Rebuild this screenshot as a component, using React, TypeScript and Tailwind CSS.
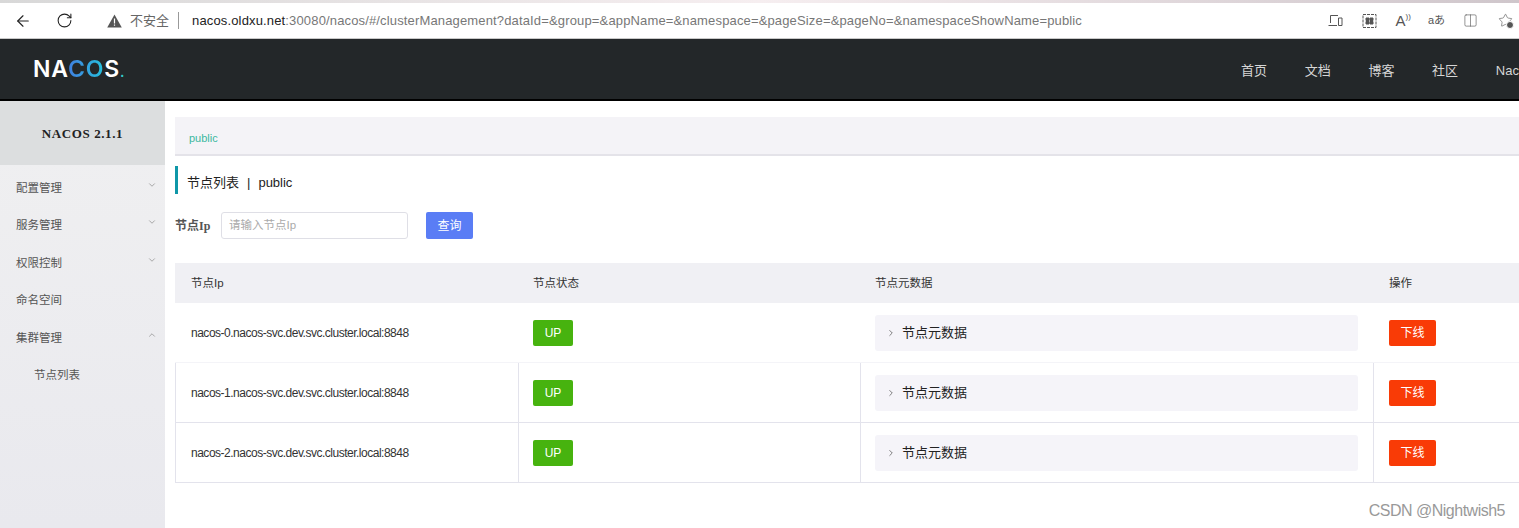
import React from 'react';
import { ArrowLeft, RotateCw, ChevronDown, ChevronUp, ChevronRight, Columns2, Star } from 'lucide-react';

const sans = "font-['Liberation_Sans','Noto_Sans_CJK_SC',sans-serif]";

const navLinks = ['首页', '文档', '博客', '社区'];
const menus = [
  { label: '配置管理', icon: 'down' },
  { label: '服务管理', icon: 'down' },
  { label: '权限控制', icon: 'down' },
  { label: '命名空间', icon: '' },
  { label: '集群管理', icon: 'up' },
];
const nodes = ['nacos-0', 'nacos-1', 'nacos-2'];

const BrowserBar = () => (
  <div className="h-[39px] bg-white border-b border-[#c9c9c9] flex flex-col">
    <div className="h-[3px] bg-gradient-to-r from-[#d8d8d8] via-[#f6eef0] to-[#cfc6cb]" />
    <div className="flex-1 flex items-center text-[#5f6368]">
      <ArrowLeft className="w-[18px] h-[18px] ml-[14px] text-[#222]" strokeWidth={1.5} />
      <RotateCw className="w-[17px] h-[17px] ml-6 text-[#222]" strokeWidth={1.5} />
      {/* warning sign */}
      <svg className="ml-[34px]" width="15" height="14" viewBox="0 0 15 14">
        <path d="M7.5 0.5L14.8 13.5H0.2z" fill="#555" />
        <path d="M6.9 4.5h1.2v5H6.9zM6.9 10.5h1.2v1.3H6.9z" fill="#fff" />
      </svg>
      <span className="ml-2 text-[13px] text-[#666]">不安全</span>
      <span className="ml-[9px] w-px h-[17px] bg-[#999]" />
      <span className="ml-[13px] text-[13px] tracking-[0.15px] whitespace-nowrap text-[#777]">
        <span className="text-[#222]">nacos.oldxu.net</span>:30080/nacos/#/clusterManagement?dataId=&amp;group=&amp;appName=&amp;namespace=&amp;pageSize=&amp;pageNo=&amp;namespaceShowName=public
      </span>
      <div className="ml-auto flex items-center text-[#555]">
        <svg width="15" height="13" viewBox="0 0 15 13" fill="none" stroke="currentColor" strokeWidth="1">
          <path d="M2.5 9V1.5H10M0.5 11.5H9M10.5 4h3.5v7.5h-3.5z" />
        </svg>
        <svg className="ml-[19px]" width="15" height="14" viewBox="0 0 14 14" fill="none" stroke="currentColor" strokeWidth="1">
          <rect x="0.5" y="0.5" width="13" height="13" strokeDasharray="3 1" />
          <path d="M3.5 4h3v2.5h-3zM7.5 4h3v2.5h-3zM3.5 7.5h3V10h-3zM7.5 7.5h3V10h-3z" fill="currentColor" />
        </svg>
        <span className="ml-[19px] text-[15px] leading-none">A</span>
        <span className="text-[8px] leading-none -mt-2">))</span>
        <span className="ml-[17px] text-[11px] leading-none">aあ</span>
        <Columns2 className="w-[15px] h-[15px] ml-[18px]" strokeWidth={1} />
        <div className="relative ml-[20px] mr-[6px]">
          <Star className="w-[15px] h-[15px]" strokeWidth={1} />
          <span className="absolute -right-[1px] -bottom-[1px] w-[8px] h-[8px] rounded-full bg-[#555] border border-white" />
        </div>
      </div>
    </div>
  </div>
);

const Header = () => (
  <div className="h-[62px] bg-[#232729] border-b-2 border-black flex items-center overflow-hidden">
    <span className="ml-[33px] text-[23px] leading-none font-semibold tracking-[0.8px] text-white font-['Inter',sans-serif]">
      NA<span className="bg-gradient-to-r from-[#3f7fe0] to-[#22c0dc] bg-clip-text text-transparent">CO</span>S<span className="text-[#3cc] text-[14px]">.</span>
    </span>
    <div className="ml-auto pt-[3px] flex items-center gap-[37.7px] text-[13px] text-[#d6d6d6] w-[278px] whitespace-nowrap">
      {navLinks.map((l) => (
        <span key={l}>{l}</span>
      ))}
      <span>Nacos</span>
    </div>
  </div>
);

const Sidebar = () => (
  <aside className="w-[165px] shrink-0 bg-gradient-to-b from-[#f0f0f1] to-[#e9e9ee]">
    <div className="h-[64px] pt-[1px] bg-[#dcdedf] flex items-center justify-center text-[13px] font-bold text-[#222] font-['Liberation_Serif','Noto_Sans_CJK_SC',serif] tracking-[0.6px]">
      NACOS 2.1.1
    </div>
    <div className="pt-[4px]">
      {menus.map((m) => (
        <div key={m.label} className="h-[37.5px] pl-[16px] pr-[8px] pt-[1px] flex items-center justify-between text-[11.5px] text-[#555]">
          <span>{m.label}</span>
          {m.icon === 'down' && <ChevronDown className="w-[10px] h-[10px] -mt-[7px] text-[#999]" />}
          {m.icon === 'up' && <ChevronUp className="w-[10px] h-[10px] -mt-[7px] text-[#999]" />}
        </div>
      ))}
      <div className="h-[37.5px] pl-[34px] pt-[1px] flex items-center text-[11.5px] text-[#555]">节点列表</div>
    </div>
  </aside>
);

const Table = () => (
  <div className="mt-[24px] text-[12px] text-[#333]">
    <div className="h-[40px] pt-[1px] bg-[#f0f0f4] grid grid-cols-[342px_342px_514px_1fr] items-center pl-[16px] text-[11.5px]">
      <span>节点Ip</span>
      <span>节点状态</span>
      <span>节点元数据</span>
      <span>操作</span>
    </div>
    {nodes.map((n, i) => (
      <div
        key={n}
        className={`h-[60px] grid grid-cols-[344px_341px_514px_1fr] items-stretch border-b ${i > 0 ? 'border-[#e3e3ec]' : 'border-[#f4f4f8]'}`}
      >
        <div className={`flex items-center tracking-[-0.49px] whitespace-nowrap ${i > 0 ? 'pl-[15px] border-l border-r border-[#e3e3ec]' : 'pl-[16px]'}`}>
          {n}.nacos-svc.dev.svc.cluster.local:8848
        </div>
        <div className="pl-[14px] flex items-center">
          <button className="w-[40px] h-[26px] rounded-[2px] bg-[#47b30f] text-white text-[12px]">UP</button>
        </div>
        <div className={`flex items-center ${i > 0 ? 'pl-[14px] pr-[15px] border-l border-r border-[#e3e3ec]' : 'pl-[15px] pr-[16px]'}`}>
          <div className="w-full h-[36px] rounded-[3px] bg-[#f5f4f9] flex items-center pl-[11px] text-[13px] text-[#222]">
            <ChevronRight className="w-[10px] h-[10px] text-[#666]" />
            <span className="ml-[6px]">节点元数据</span>
          </div>
        </div>
        <div className="pl-[15px] flex items-center">
          <button className="w-[47px] h-[26px] rounded-[2px] bg-[#f93b06] text-white text-[12px]">下线</button>
        </div>
      </div>
    ))}
  </div>
);

export default function App() {
  return (
    <div className={`relative w-[1519px] h-[528px] overflow-hidden bg-white ${sans}`}>
      <BrowserBar />
      <Header />
      <div className="flex h-[427px]">
        <Sidebar />
        <main className="flex-1 pl-[10px] pt-[16px] min-w-0">
          <div className="h-[39px] bg-[#f4f3f7] border-b-2 border-[#e4e3e9] flex items-center pl-[14px] pt-[5px] text-[11px] text-[#3bb8a0]">
            public
          </div>
          <div className="mt-[10px] h-[28px] border-l-[3px] border-[#0f97a8] pl-[9px] pt-[6px] flex items-center text-[13px] text-[#222]">
            节点列表<span className="mx-[8px]">|</span>public
          </div>
          <div className="mt-[18px] flex items-center">
            <span className="text-[12px] pt-[1px] font-bold text-[#555] font-['Liberation_Serif','Noto_Sans_CJK_SC',serif] w-[46px]">节点Ip</span>
            <div className="w-[187px] h-[27px] border border-[#dfdfe6] rounded-[3px] pl-[7px] pt-[1px] flex items-center text-[11.5px] text-[#aaa]">
              请输入节点Ip
            </div>
            <button className="ml-[18px] w-[47px] h-[27px] rounded-[2px] bg-[#5a7df5] text-white text-[12px]">查询</button>
          </div>
          <Table />
        </main>
      </div>
      <span className="absolute right-[14px] top-[499px] text-[16px] tracking-[-0.5px] text-[#999]">
        CSDN @Nightwish5
      </span>
    </div>
  );
}
